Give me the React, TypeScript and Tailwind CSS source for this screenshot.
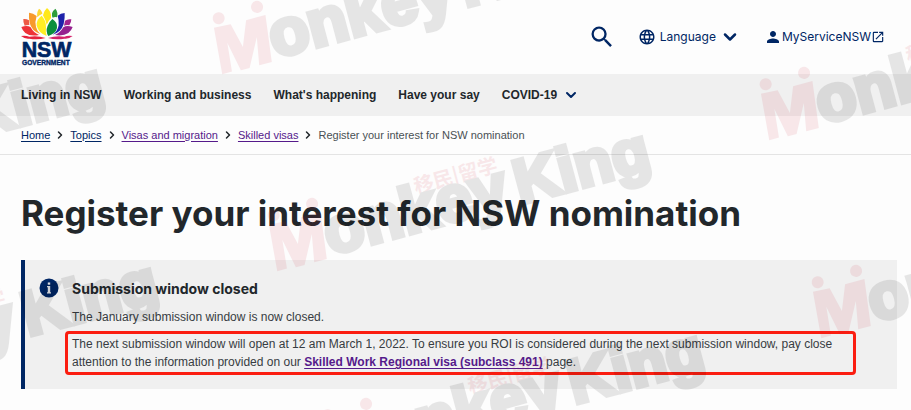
import React from 'react';
import { ChevronDown, ChevronRight } from 'lucide-react';
import { MdLanguage, MdOpenInNew, MdPerson, MdSearch } from 'react-icons/md';

const NAV_ITEMS = ['Living in NSW', 'Working and business', "What's happening", 'Have your say'];

const CRUMBS = [
  { label: 'Home', visited: false },
  { label: 'Topics', visited: false },
  { label: 'Visas and migration', visited: true },
  { label: 'Skilled visas', visited: true },
];

// Top left corner of the M in each repeat
const MARKS = [
  [213, 28],
  [760, 94],
  [-278, 159],
  [268, 225],
  [812, 292],
  [-224, 357],
  [322, 425],
];

const Logo: React.FC = () => (
  <svg viewBox="60 21 162 180" className="h-[60px] w-[54px]" role="img" aria-label="NSW Government">
    <path fill="#fdd835" d="M117 26 C123 30 127 36 127 41 Q118 45 112 52 Q109 38 117 26Z" />
    <path fill="#ffe81a" d="M141 24 Q155 35 153 54 Q144 64 140 74 Q136 58 129 46 Q131 33 141 24Z" />
    <path fill="#ffee24" d="M125 47 Q139 62 138 82 Q136 95 140 108 Q116 99 110 77 Q109 57 125 47Z" />
    <path fill="#0b8f3c" d="M157 57 Q174 68 171 84 Q167 101 145 108 Q136 94 143 77 Q147 66 157 57Z" />
    <path fill="#2f9e3a" d="M166 26 Q175 36 171 52 Q165 50 158 53 Q155 48 156 40 Q158 32 166 26Z" />
    <path fill="#f79a2c" d="M87 38 Q100 39 110 48 Q104 65 108 81 Q111 93 121 102 Q94 92 89 68 Q86 55 87 38Z" />
    <path fill="#1e22aa" d="M194 39 Q182 40 173 47 Q177 59 176 76 Q173 94 158 104 Q184 96 191 72 Q195 55 194 39Z" />
    <path fill="#ee5a45" d="M70 57 Q79 56 87 61 L88 75 Q81 74 74 77 Q69 67 70 57Z" />
    <path fill="#a3238e" d="M214 58 Q203 56 195 62 L192 77 Q201 73 208 76 Q214 67 214 58Z" />
    <path fill="#ee3338" d="M64 81 Q82 75 92 82 Q100 98 117 105 Q91 110 76 99 Q67 91 64 81Z" />
    <path fill="#96208f" d="M218 81 Q200 75 190 82 Q181 98 165 105 Q190 109 205 99 Q214 92 218 81Z" />
    <path fill="#e5233d" d="M63 108 Q78 106 88 110 Q112 106 137 114 Q112 121 88 116 Q76 118 63 108Z" />
    <path fill="#d5216a" d="M218 108 Q203 106 193 110 Q169 106 144 114 Q169 121 193 116 Q205 118 218 108Z" />
    <g fill="#002664" stroke="#002664" fontWeight="700" fontFamily="Liberation Sans, sans-serif">
      <text x="65" y="171" strokeWidth="2" fontSize="64">NSW</text>
      <text x="66" y="195" strokeWidth="1" fontSize="20">GOVERNMENT</text>
    </g>
  </svg>
);

const Watermark: React.FC = () => (
  <svg className="pointer-events-none absolute inset-0 h-full w-full" aria-hidden="true">
    {MARKS.map(([x, y]) => (
      <g key={`${x},${y}`} transform={`translate(${x} ${y}) rotate(-15)`} opacity="0.09">
        <g fill="#c8142d">
          <circle cx="8" cy="-8" r="6" />
          <circle cx="48" cy="-9" r="6" />
          <path d="M1 0 L18 1 L24 26 L34 1 L54 1 L48 48 L35 48 L40 20 L25 48 L16 48 L10 18 L7 47 L-3 47Z" />
          <text x="151" y="8" fontSize="20" fontWeight="700" fontFamily="Noto Sans CJK SC, sans-serif">移民|留学</text>
        </g>
        <g fill="#000000" stroke="#000000" strokeWidth="5" fontWeight="700" fontFamily="Liberation Sans, sans-serif">
          <text x="52" y="45" fontSize="65">onkey</text>
          <text x="249" y="45" fontSize="62">King</text>
        </g>
      </g>
    ))}
  </svg>
);

const Header: React.FC = () => (
  <header className="flex h-[74px] items-center justify-between pl-5 pr-[26px] text-[#002664]">
    <a href="#" className="block">
      <Logo />
    </a>
    <div className="flex items-center text-xs">
      <button type="button" aria-label="Search" className="mr-[22px]">
        <MdSearch className="size-7" />
      </button>
      <button type="button" className="mr-6 flex items-center gap-1">
        <MdLanguage className="size-[18px]" />
        Language
        <ChevronDown className="size-5" strokeWidth={3} />
      </button>
      <a href="#" className="flex items-center">
        <MdPerson className="size-[18px]" />
        MyServiceNSW
        <MdOpenInNew className="size-3.5" />
      </a>
    </div>
  </header>
);

export default function App() {
  return (
    <div className="relative min-h-screen overflow-hidden bg-[#fdfdfd] font-['Inter',sans-serif] text-[#22272b]">
      <Header />

      <nav className="flex h-[42px] items-center gap-[22px] bg-[#f0f0f0] px-[21px] font-['Liberation_Sans',sans-serif] text-xs font-bold">
        {NAV_ITEMS.map((item) => (
          <a key={item} href="#">{item}</a>
        ))}
        <button type="button" className="flex items-center gap-1.5">
          COVID-19
          <ChevronDown className="size-4 text-[#002664]" strokeWidth={3} />
        </button>
      </nav>

      <nav aria-label="Breadcrumb" className="border-b border-[#e4e4e4] px-[21px]">
        <ol className="flex h-[38px] items-center font-['Liberation_Sans',sans-serif] text-[11px]">
          {CRUMBS.map(({ label, visited }) => (
            <li key={label} className="flex items-center">
              <a href="#" className={`underline underline-offset-2 ${visited ? 'text-[#551a8b]' : 'text-[#002664]'}`}>{label}</a>
              <ChevronRight className="mx-1 size-3" strokeWidth={3} />
            </li>
          ))}
          <li className="text-[#495054]">Register your interest for NSW nomination</li>
        </ol>
      </nav>

      <main className="pl-[21px] pr-3.5">
        <h1 className="pb-6 pt-9 text-[35px] font-bold leading-[45px]">Register your interest for NSW nomination</h1>

        <section className="flex border-l-4 border-[#002664] bg-[#f0f0f0] pb-3.5 pl-3.5 pr-[41px] pt-[18px]">
          <svg viewBox="0 0 20 20" className="size-5 shrink-0" aria-hidden="true">
            <circle cx="10" cy="10" r="9.5" fill="#002664" />
            <path d="M8.8 4.5h2.4v2.2H8.8z M8 8h3.2v6.2h.8v1.3H8v-1.3h.8V9.3H8z" fill="#e3e5ea" />
          </svg>
          <div className="min-w-0 flex-1 pl-1.5 font-['Liberation_Sans',sans-serif] text-xs leading-[18px] text-[#373c42]">
            <h2 className="pl-[7px] font-['Inter',sans-serif] text-sm font-bold leading-[22px] text-[#22272b]">Submission window closed</h2>
            <p className="pb-[5px] pl-[7px] pt-2">The January submission window is now closed.</p>
            <p className="rounded-sm border-3 border-[#fb1d10] px-1 py-px">
              The next submission window will open at 12 am March 1, 2022. To ensure you ROI is considered during the next submission window, pay close
              attention to the information provided on our{' '}
              <a href="#" className="font-bold text-[#551a8b] underline underline-offset-2">Skilled Work Regional visa (subclass 491)</a> page.
            </p>
          </div>
        </section>
      </main>

      <Watermark />
    </div>
  );
}
